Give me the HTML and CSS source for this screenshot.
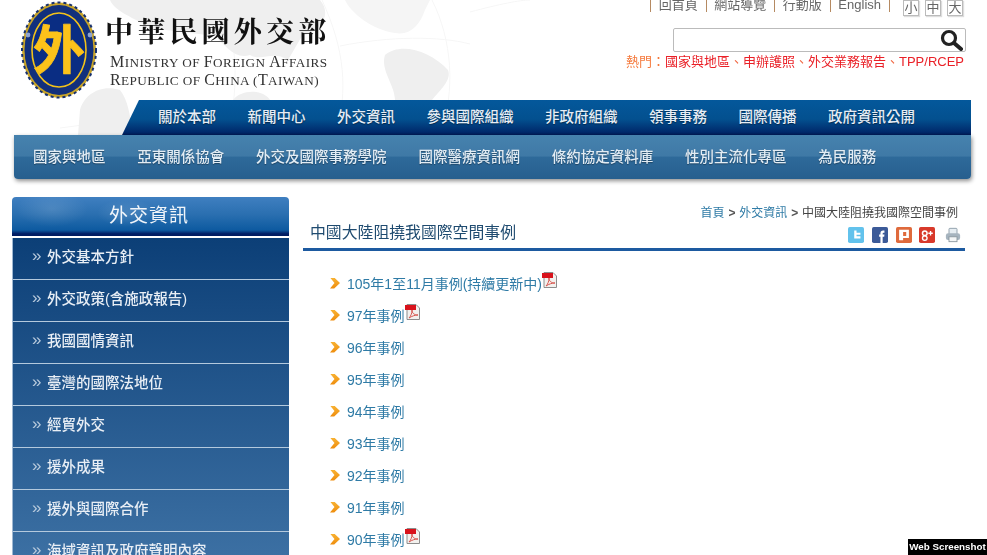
FILE: index.html
```html
<!DOCTYPE html>
<html lang="zh-Hant">
<head>
<meta charset="utf-8">
<title>中國大陸阻撓我國際空間事例</title>
<link rel="stylesheet" href="styles.css">
</head>
<body>
<div class="page">
  <svg class="worldmap" viewBox="0 0 700 135" width="700" height="135" aria-hidden="true">
    <path class="grid" d="M60 128 C200 108 360 112 520 138 M222 0 C236 40 240 80 228 135 M322 0 C345 50 348 90 336 135 M432 0 C452 40 456 90 440 135 M340 46 C390 36 440 36 470 44 M470 12 C500 4 520 0 530 0"/>
    <path d="M110 0 L320 0 C332 14 322 30 302 36 L288 60 C272 50 262 62 250 55 C235 60 225 45 215 36 L150 28 C135 18 115 12 110 0Z"/>
    <path d="M78 135 L133 135 C130 115 128 100 120 90 C100 84 84 95 80 110Z"/>
    <path d="M233 100 C240 90 262 88 270 100Z"/>
    <path class="light" d="M345 0 C350 12 372 30 395 33 C410 36 420 25 425 10 L430 0Z"/>
    <path d="M385 55 C400 42 430 50 448 70 C452 80 440 90 432 100 L395 100 C395 85 380 70 385 55Z"/>
  </svg>

  <header class="header">
    <div class="brand">
      <svg class="logo" viewBox="0 0 76 98" width="76" height="98" aria-hidden="true">
        <ellipse cx="38" cy="49" rx="37" ry="47.5" fill="#c9a52a"/>
        <ellipse cx="38" cy="49" rx="37" ry="47.5" fill="none" stroke="#16306f" stroke-width="2" stroke-dasharray="3 3"/>
        <ellipse cx="38" cy="49" rx="34.5" ry="45" fill="#12307c"/>
        <ellipse cx="38" cy="49" rx="27" ry="37" fill="#0a2d83" stroke="#f2c21a" stroke-width="1.6"/>
        <circle cx="7" cy="34" r="2.400" fill="#8fa4d0"/>
        <circle cx="69" cy="34" r="2.400" fill="#8fa4d0"/>
        <text class="logo-char" x="38" y="68" text-anchor="middle">外</text>
      </svg>
      <div class="brand-text">
        <div class="brand-zh">中華民國外交部</div>
        <div class="brand-en"><span class="cap">M</span>INISTRY OF <span class="cap">F</span>OREIGN <span class="cap">A</span>FFAIRS</div>
        <div class="brand-en"><span class="cap">R</span>EPUBLIC OF <span class="cap">C</span>HINA (<span class="cap">T</span>AIWAN)</div>
      </div>
    </div>
    <div class="tools">
      <div class="toplinks">
        <a class="toplink">回首頁</a><a class="toplink">網站導覽</a><a class="toplink">行動版</a><a class="toplink">English</a><span class="endbar"></span>
        <span class="sizes"><span class="size">小</span><span class="size">中</span><span class="size">大</span></span>
      </div>
      <div class="search">
        <svg viewBox="0 0 24 22" width="24" height="22" aria-hidden="true"><circle cx="10" cy="9" r="6.500" fill="none" stroke="#222" stroke-width="3.200"/><path d="M15 14 L22 20" stroke="#222" stroke-width="4" stroke-linecap="round"/></svg>
      </div>
      <div class="hot"><span class="hot-label">熱門&#xFF1A;</span>國家與地區<span class="hot-sep">、</span>申辦護照<span class="hot-sep">、</span>外交業務報告<span class="hot-sep">、</span>TPP/RCEP</div>
    </div>
  </header>

  <nav class="nav-main">
    <a>關於本部</a><a>新聞中心</a><a>外交資訊</a><a>參與國際組織</a><a>非政府組織</a><a>領事事務</a><a>國際傳播</a><a>政府資訊公開</a>
  </nav>
  <nav class="nav-sub">
    <a>國家與地區</a><a>亞東關係協會</a><a>外交及國際事務學院</a><a>國際醫療資訊網</a><a>條約協定資料庫</a><a>性別主流化專區</a><a>為民服務</a>
  </nav>

  <div class="main">
    <aside class="side">
      <div class="side-title">外交資訊</div>
      <ul class="side-list">
        <li>外交基本方針</li>
        <li>外交政策(含施政報告)</li>
        <li>我國國情資訊</li>
        <li>臺灣的國際法地位</li>
        <li>經貿外交</li>
        <li>援外成果</li>
        <li>援外與國際合作</li>
        <li>海域資訊及政府聲明內容</li>
      </ul>
    </aside>
    <section class="content">
      <div class="crumbs"><a>首頁</a> <b>&gt;</b> <a>外交資訊</a> <b>&gt;</b> 中國大陸阻撓我國際空間事例</div>
      <div class="title-row">
        <h1 class="title">中國大陸阻撓我國際空間事例</h1>
        <div class="share">
          <svg viewBox="0 0 18 18" width="16" height="16" aria-hidden="true"><rect width="18" height="18" rx="2" fill="#62c2ec"/><path d="M7 4v9h7v-2.500H9.600V8.600H14V6.400H9.600V4Z" fill="#fff"/></svg>
          <svg viewBox="0 0 18 18" width="16" height="16" aria-hidden="true"><rect width="18" height="18" rx="2" fill="#3b5a98"/><path d="M9.500 18v-7H8V8.500h1.500V7c0-2 1-3 3-3H14v2.500h-1c-.7 0-1 .3-1 1v1h2l-.3 2.500H12v7Z" fill="#fff"/></svg>
          <svg viewBox="0 0 18 18" width="16" height="16" aria-hidden="true"><rect width="18" height="18" rx="2" fill="#df6a3c"/><path d="M3.500 3h11v9.500H8V15H3.500Zm4.500 2.500v4.500h3.500V5.500Z" fill="#fff" fill-rule="evenodd"/></svg>
          <svg viewBox="0 0 18 18" width="16" height="16" aria-hidden="true"><rect width="18" height="18" rx="2" fill="#d8392b"/><circle cx="6.500" cy="7" r="2.600" fill="none" stroke="#fff" stroke-width="1.700"/><circle cx="6.500" cy="12.500" r="2.600" fill="none" stroke="#fff" stroke-width="1.500"/><path d="M10.500 7h5M13 4.500v5" stroke="#fff" stroke-width="1.500"/></svg>
          <svg class="print" viewBox="0 0 18 18" width="16" height="16" aria-hidden="true"><rect x="4.500" y="1.500" width="9" height="7" rx="1" fill="#e6edf2" stroke="#8a9aa6"/><rect x="1" y="7" width="16" height="7.500" rx="2.500" fill="#a6b4bf"/><rect x="4.500" y="11" width="9" height="5.500" fill="#f4f6f7" stroke="#8a979f"/></svg>
        </div>
      </div>
      <ul class="cases">
        <li><a>105年1至11月事例(持續更新中)</a><svg class="pdf" viewBox="0 0 15 16" width="15" height="16" aria-hidden="true"><use href="#pdf"/></svg></li>
        <li><a>97年事例</a><svg class="pdf" viewBox="0 0 15 16" width="15" height="16" aria-hidden="true"><use href="#pdf"/></svg></li>
        <li><a>96年事例</a></li>
        <li><a>95年事例</a></li>
        <li><a>94年事例</a></li>
        <li><a>93年事例</a></li>
        <li><a>92年事例</a></li>
        <li><a>91年事例</a></li>
        <li><a>90年事例</a><svg class="pdf" viewBox="0 0 15 16" width="15" height="16" aria-hidden="true"><use href="#pdf"/></svg></li>
      </ul>
    </section>
  </div>
  <div class="tag">Web Screenshot</div>

  <svg class="defs" width="0" height="0" aria-hidden="true">
    <symbol id="pdf" viewBox="0 0 15 16">
      <path d="M2 .5h9l3.500 3.500v11.500H2Z" fill="#f3f1ee" stroke="#8d8d8d"/>
      <rect x="0" y="1" width="11" height="5" fill="#d8121b"/>
      <path d="M4 14c2-2 3-5 3-8 0 3 2 5 6 5-3 0-6 1-9 3Z" fill="none" stroke="#d8564f"/>
    </symbol>
  </svg>
</div>
</body>
</html>
```
FILE: styles.css
```css
* { box-sizing: border-box; }
html, body { margin: 0; height: 555px; overflow: hidden; background: #fff; }
body { font-family: "Liberation Sans", "Noto Sans CJK TC", sans-serif; }
a { color: inherit; text-decoration: none; }
ul { list-style: none; margin: 0; padding: 0; }

.page { position: relative; width: 987px; height: 555px; overflow: hidden; filter: blur(.35px); }
.worldmap { position: absolute; left: 0; top: 0; fill: #efefef; }
.worldmap .light { fill: #f5f5f5; }
.worldmap .grid { fill: none; stroke: #f6f6f6; stroke-width: 1; }
.defs { position: absolute; }

.header { position: relative; display: flex; justify-content: space-between; height: 100px; padding: 0 21px 0 21px; }
.brand { display: flex; padding-top: 1px; }
.logo-char { font-family: "Noto Sans CJK TC", sans-serif; font-weight: 700; font-size: 52px; fill: #fcc21a; stroke: #fcc21a; stroke-width: .8px; stroke-linejoin: round; }
.brand-text { padding: 10px 0 0 13px; }
.brand-zh { font-family: "Noto Serif CJK TC", "Noto Sans CJK TC", sans-serif; font-weight: 700; font-size: 28px; line-height: 38px; letter-spacing: 4.200px; margin: 0 0 4px -5px; color: #111; white-space: nowrap; }
.brand-en { font-family: "Liberation Serif", serif; font-size: 13.200px; letter-spacing: .43px; line-height: 17px; color: #333; white-space: nowrap; }
.cap { font-size: 16px; }

.tools { display: flex; flex-direction: column; align-items: flex-end; }
.toplinks { display: flex; align-items: flex-start; height: 28px; color: #666; font-size: 13px; padding-right: 3px; }
.toplink { padding: 0 8px 0 7.500px; border-left: 1px solid #b58a62; height: 12px; line-height: 10px; }
.endbar { border-left: 1px solid #b58a62; height: 12px; }
.sizes { display: flex; gap: 6px; margin-left: 13px; }
.size { width: 16px; height: 16px; border: 1px solid #bbb; box-shadow: 1px 1px 1px #ddd; text-align: center; font-size: 13px; line-height: 13px; color: #666; }
.search { width: 293px; height: 24px; border: 1px solid #bbb; border-radius: 2px; background: #fff; display: flex; justify-content: flex-end; align-items: center; padding-right: 2px; }
.hot { margin-top: 1px; padding-right: 2px; font-size: 13px; line-height: 18px; color: #ea2027; white-space: nowrap; }
.hot-label { color: #f5793b; }
.hot-sep { color: #f0603a; }

.nav-main { margin-left: 122px; width: 849px; height: 35px; padding: 0 0 4px 36px; display: flex; gap: 31.500px; align-items: center; position: relative; color: #e6edf5; font-size: 14.500px; font-weight: 500; background: linear-gradient(#04589b, #03508f 55%, #00296b 92%, #001a55); clip-path: polygon(17px 0, 100% 0, 100% 100%, 0 100%); text-shadow: 0 1px 1px rgba(0,0,0,.4); }
.nav-main a { white-space: nowrap; }
.nav-sub { margin-left: 14px; width: 957px; height: 44px; padding: 0 0 3px 19px; display: flex; gap: 31.800px; align-items: center; color: #e2ecf4; font-size: 14.500px; font-weight: 500; border-radius: 0 0 4px 4px; position: relative; background: linear-gradient(#4682ae, #3f79a6 48%, #2e6a9a 50%, #275f8e); box-shadow: 1px 2px 4px rgba(0,0,0,.45); text-shadow: 0 1px 1px rgba(0,0,0,.35); }
.nav-sub a { white-space: nowrap; }

.main { display: flex; margin: 18px 0 0 12px; }
.side { width: 277px; flex: none; }
.side-title { height: 39px; border-radius: 4px 4px 0 0; padding-right: 3px; text-align: center; color: #f0f5fa; font-size: 19px; letter-spacing: 1px; line-height: 37px; background: radial-gradient(ellipse 36px 18px at 40px 12px, rgba(255,255,255,.13), transparent), radial-gradient(ellipse 30px 14px at 115px 16px, rgba(255,255,255,.13), transparent), linear-gradient(#3f7fc0, #2a6fb0 45%, #0d5aa0 85%, #021f66 94%, #001b60); }
.side-list { margin-top: 2px; height: 340px; border-left: 1px solid #9fb8d2; background: linear-gradient(#0c3f77, #3f73a6); }
.side-list li { position: relative; height: 42px; padding-left: 34px; line-height: 39px; font-size: 14.500px; font-weight: 500; color: #e8eef5; border-bottom: 1px solid #b4c9dd; white-space: nowrap; }
.side-list li::before { content: "»"; position: absolute; left: 19px; top: -2px; color: #b9cbdd; font: 17px/39px "Liberation Sans", sans-serif; }

.content { width: 662px; margin-left: 14px; }
.crumbs { text-align: right; padding: 8px 7px 0 0; height: 26px; font-size: 12px; line-height: 17px; color: #444; white-space: nowrap; }
.crumbs a { color: #2f7ba6; }
.crumbs b { margin: 0 .5px; font-weight: 700; color: #555; }
.title-row { display: flex; justify-content: space-between; align-items: flex-start; height: 28px; padding: 2px 0 0 7px; border-bottom: 3px solid #1d5aa0; }
.title { margin: -4px 0 0; font-size: 15.850px; font-weight: 400; line-height: 24px; color: #1f4b70; }
.share { display: flex; gap: 7.700px; padding-right: 4px; margin-top: 2px; }
.print { margin-left: 2px; }
.cases { padding: 16px 0 0 27px; }
.cases li { display: flex; height: 32px; align-items: center; padding-left: 17px; position: relative; font-size: 14px; color: #2f7ba6; white-space: nowrap; }
.cases li::before { content: ""; position: absolute; left: 0; top: 10.500px; width: 10px; height: 11px; background: linear-gradient(#f8b233, #ee8c0c); clip-path: polygon(0 0, 42% 0, 100% 50%, 42% 100%, 0 100%, 45% 50%); }
.pdf { margin: -6px 0 0 0; }

.tag { position: absolute; right: 0; bottom: 0; width: 79px; height: 16px; background: #000; color: #fff; font: 700 9.800px/16px "Liberation Sans", sans-serif; text-align: center; white-space: nowrap; }
```
